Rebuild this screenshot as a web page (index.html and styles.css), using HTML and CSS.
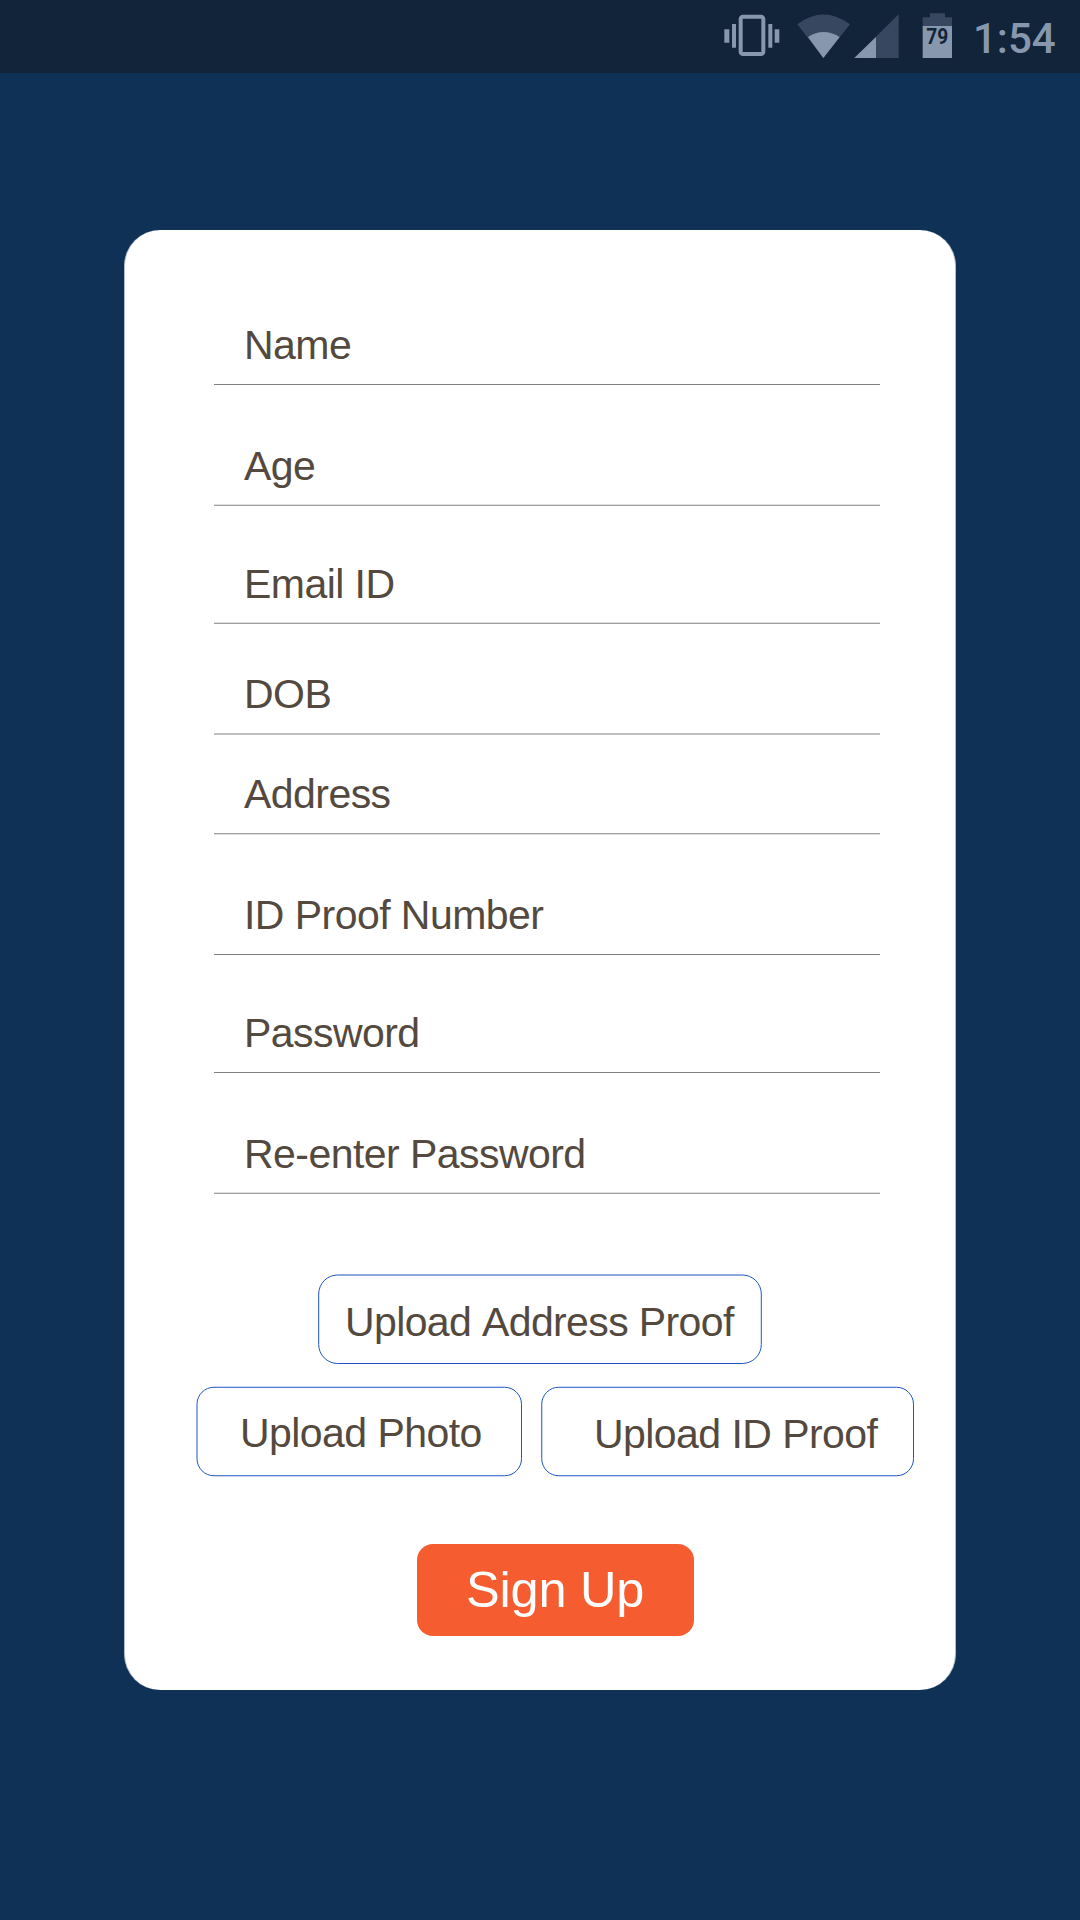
FILE: index.html
```html
<!DOCTYPE html>
<html lang="en">
<head>
<meta charset="utf-8">
<title>Sign Up</title>
<link rel="stylesheet" href="styles.css">
</head>
<body>
<header class="status-bar">
  <svg class="icon" width="80" height="73" viewBox="0 0 240 219" aria-hidden="true">
    <rect x="92" y="50" width="68" height="112" rx="7" fill="none" stroke="#8797ad" stroke-width="12"/>
    <path d="M43 88h15v40H43zM66 72h12v71H66zM175 72h12v71h-12zM194 88h14v40h-14z" fill="#8797ad"/>
  </svg>
  <svg class="icon" width="63" height="73" viewBox="240 0 189 219" aria-hidden="true">
    <path d="M262 73Q340 14 420 73L340 174Z" fill="#37475f"/>
    <path d="M294 111Q340 81 389 111L340 174Z" fill="#8797ad"/>
  </svg>
  <svg class="icon" width="57" height="73" viewBox="429 0 171 219" aria-hidden="true">
    <path d="M566 43V174H433Z" fill="#37475f"/>
    <path d="M498 111V174H433Z" fill="#8797ad"/>
  </svg>
  <svg class="icon" width="60" height="73" viewBox="600 0 180 219" aria-hidden="true">
    <path d="M638 80V52H660V40H705V52H726V80Z" fill="#37475f"/>
    <path d="M638 78H726V174H638Z" fill="#8797ad"/>
    <text class="battery-level" x="682" y="131" text-anchor="middle" textLength="66" lengthAdjust="spacingAndGlyphs">79</text>
  </svg>
  <time class="clock">1:54</time>
</header>
<main class="card">
  <form class="fields">
    <div class="field field-name"><label>Name</label><i class="rule crisp"></i></div>
    <div class="field field-age"><label>Age</label><i class="rule lower"></i></div>
    <div class="field field-email"><label>Email ID</label><i class="rule lower"></i></div>
    <div class="field field-dob"><label>DOB</label><i class="rule even"></i></div>
    <div class="field field-address"><label>Address</label><i class="rule upper"></i></div>
    <div class="field field-id"><label>ID Proof Number</label><i class="rule crisp"></i></div>
    <div class="field field-password"><label>Password</label><i class="rule crisp"></i></div>
    <div class="field field-repeat"><label>Re-enter Password</label><i class="rule lower"></i></div>
  </form>
  <div class="uploads">
    <div class="upload address-proof">
      <svg class="outline" width="446" height="92"><rect x="1.7" y="2" width="442.6" height="88.5" rx="19"/></svg>
      <span>Upload Address Proof</span>
    </div>
    <div class="upload photo">
      <svg class="outline" width="328" height="92"><rect x="2" y="2.25" width="324.5" height="88.5" rx="17"/></svg>
      <span>Upload Photo</span>
    </div>
    <div class="upload id-proof">
      <svg class="outline" width="376" height="92"><rect x="1.75" y="2.25" width="371.75" height="88.5" rx="17"/></svg>
      <span>Upload ID Proof</span>
    </div>
  </div>
  <div class="submit">Sign Up</div>
</main>
</body>
</html>
```
FILE: styles.css
```css
* { box-sizing: border-box; }

body {
  margin: 0;
  width: 1080px;
  height: 1920px;
  overflow: hidden;
  background: #103156;
  font-family: "Liberation Sans", Arial, sans-serif;
  color: #54493f;
}

.status-bar {
  display: flex;
  height: 73px;
  padding-left: 710px;
  background: #12243a;
}

.icon { display: block; flex: none; }

.battery-level {
  font: 700 68px Roboto, sans-serif;
  fill: #12243a;
}

.clock {
  padding-left: 3px;
  font: 500 42px/78px Roboto, sans-serif;
  color: #8797ad;
}

.card {
  width: 832px;
  height: 1460px;
  margin: 157px 0 0 124px;
  border: solid #b0bdcb;
  border-width: 0 1px;
  border-radius: 36px;
  background: #fff;
}

.fields {
  width: 666px;
  margin-left: 89px;
}

.field {
  display: flex;
  flex-direction: column;
  justify-content: flex-end;
}

.field label {
  padding-left: 30px;
  margin-bottom: 16px;
}

.field-age label,
.field-email label,
.field-repeat label { margin-bottom: 15px; }

.field label,
.upload {
  font-size: 41px;
  line-height: 46px;
  letter-spacing: -0.55px;
  font-kerning: none;
  white-space: nowrap;
}

.field-name { height: 156px; }
.field-age { height: 120px; }
.field-email { height: 118px; }
.field-dob { height: 111px; }
.field-address { height: 100px; }
.field-id { height: 121px; }
.field-password { height: 118px; }
.field-repeat { height: 120px; }

.rule { border-top: 1px solid; border-bottom: 1px solid; }
.crisp { border-top-color: #808080; border-bottom-color: #fff; }
.lower { border-top-color: #dfdfdf; border-bottom-color: #9f9f9f; }
.upper { border-top-color: #9f9f9f; border-bottom-color: #dfdfdf; }
.even { border-color: #bfbfbf; }

.uploads {
  display: grid;
  grid-template-columns: 328px 376px;
  grid-template-rows: 92px 92px;
  gap: 20px 17px;
  margin: 79px 0 0 70px;
}

.upload { position: relative; height: 92px; }

.outline {
  position: absolute;
  inset: 0;
  fill: none;
  stroke: #1d55c5;
}

.address-proof {
  grid-column: 1 / 3;
  width: 446px;
  margin-left: 122px;
  padding: 26px 0 0 28px;
  letter-spacing: -0.62px;
}

.photo { padding: 25px 0 0 45px; }
.id-proof { padding: 26px 0 0 54px; }

.submit {
  width: 277px;
  height: 92px;
  margin: 67px 0 0 292px;
  padding-left: 49px;
  border-radius: 16px;
  background: #f55d30;
  color: #fff;
  font-size: 50.5px;
  line-height: 91px;
  letter-spacing: -0.2px;
  font-kerning: none;
}
```
